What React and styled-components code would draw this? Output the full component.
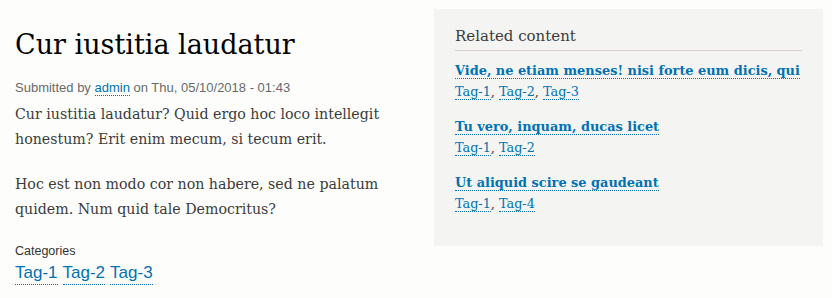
import React from "react"
import styled, { createGlobalStyle } from "styled-components"

const GlobalStyle = createGlobalStyle`
  html, body {
    margin: 0;
    padding: 0;
    background: #fdfefc;
  }
  body {
    font-family: "DejaVu Serif", Georgia, serif;
    color: #3b3b3b;
  }
`

const Page = styled.div`
  display: flex;
  align-items: flex-start;
  padding: 9px 9px 0 15px;
`

const Main = styled.main`
  width: 419px;
  flex: none;
`

const Title = styled.h1`
  margin: 18px 0 0;
  font-family: "DejaVu Serif", Georgia, serif;
  font-weight: normal;
  font-size: 27px;
  line-height: 36px;
  color: #000;
`

const Meta = styled.div`
  margin-top: 16px;
  font-family: "Liberation Sans", Arial, sans-serif;
  font-size: 13px;
  line-height: 18px;
  color: #68696b;
`

const Link = styled.a`
  color: #0071b3;
  text-decoration: none;
  border-bottom: 1px dotted;
  font-weight: ${(p) => (p.$bold ? "bold" : "normal")};
`

const Body = styled.div`
  font-size: 14.2px;
  line-height: 25px;
  color: #3b3b3b;
  width: 380px;

  p {
    margin: 5px 0 20px;
  }
`

const FieldLabel = styled.div`
  font-family: "Liberation Sans", Arial, sans-serif;
  font-size: 12.5px;
  line-height: 18px;
  color: #333;
`

const TagList = styled.div`
  display: flex;
  gap: 5px;
  margin-top: 2px;
  font-family: "Liberation Sans", Arial, sans-serif;
  font-size: 17px;
  line-height: 22px;
`

const Sidebar = styled.aside`
  width: 389px;
  height: 237px;
  box-sizing: border-box;
  padding: 17px 21px 0;
  background: #f4f5f3;
`

const SideTitle = styled.h2`
  margin: 0 0 9px;
  padding-bottom: 4px;
  border-bottom: 1px solid #dccfd0;
  font-weight: normal;
  font-size: 15px;
  line-height: 20px;
  color: #3b3b3b;
`

const Item = styled.div`
  margin-bottom: 14px;
  font-size: 12.8px;
  line-height: 21px;
`

const ItemTitle = styled.div`
  font-size: 12.9px;
  white-space: nowrap;
`

const related = [
  { title: "Vide, ne etiam menses! nisi forte eum dicis, qui", tags: ["Tag-1", "Tag-2", "Tag-3"] },
  { title: "Tu vero, inquam, ducas licet", tags: ["Tag-1", "Tag-2"] },
  { title: "Ut aliquid scire se gaudeant", tags: ["Tag-1", "Tag-4"] },
]

export default function App() {
  return (
    <>
      <GlobalStyle />
      <Page>
        <Main>
          <Title>Cur iustitia laudatur</Title>
          <Meta>
            Submitted by <Link href="#">admin</Link> on Thu, 05/10/2018 - 01:43
          </Meta>
          <Body>
            <p>Cur iustitia laudatur? Quid ergo hoc loco intellegit honestum? Erit enim mecum, si tecum erit.</p>
            <p>Hoc est non modo cor non habere, sed ne palatum quidem. Num quid tale Democritus?</p>
          </Body>
          <FieldLabel>Categories</FieldLabel>
          <TagList>
            <Link href="#">Tag-1</Link>
            <Link href="#">Tag-2</Link>
            <Link href="#">Tag-3</Link>
          </TagList>
        </Main>
        <Sidebar>
          <SideTitle>Related content</SideTitle>
          {related.map((item) => (
            <Item key={item.title}>
              <ItemTitle>
                <Link href="#" $bold>{item.title}</Link>
              </ItemTitle>
              <div>
                {item.tags.map((t, i) => (
                  <React.Fragment key={t}>
                    {i > 0 && ", "}
                    <Link href="#">{t}</Link>
                  </React.Fragment>
                ))}
              </div>
            </Item>
          ))}
        </Sidebar>
      </Page>
    </>
  )
}
